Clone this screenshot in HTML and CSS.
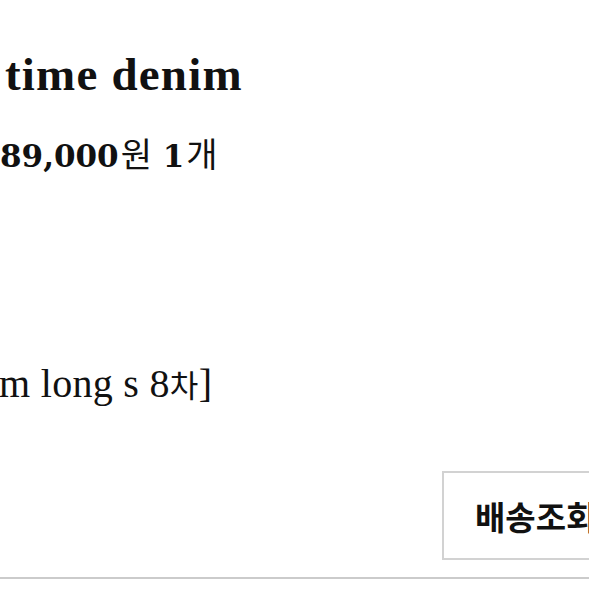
FILE: index.html
```html
<!DOCTYPE html>
<html lang="ko">
<head>
<meta charset="utf-8">
<title>주문 상세</title>
<link rel="stylesheet" href="styles.css">
</head>
<body>
<div class="order">
  <div class="item">
    <h2 class="item-name">time denim</h2>
    <p class="item-price"><span class="num">89,000</span><span class="ko">원</span> <span class="num">1</span><span class="ko">개</span></p>
    <p class="item-option">m long s 8<span class="ko">차</span>]</p>
  </div>
  <div class="actions">
    <button class="btn-track" type="button">배송조회</button>
  </div>
</div>
</body>
</html>
```

FILE: styles.css
```css
html,
body {
  margin: 0;
  padding: 0;
  background: #fff;
  overflow: hidden;
}

.order {
  width: 589px;
  color: #111;
  font-family: "Liberation Serif", serif;
}

.item {
  display: flex;
  flex-direction: column;
}

.item-name {
  margin: 46px 0 0 5px;
  font-size: 47px;
  line-height: 56px;
  font-weight: 700;
  letter-spacing: 1.2px;
}

.item-price {
  margin: 31px 0 0 0;
  font-family: "DejaVu Serif", serif;
  font-size: 31px;
  line-height: 40px;
  font-weight: 700;
}

.item-price .ko {
  font-family: "Noto Sans CJK KR", sans-serif;
  font-weight: 400;
  font-size: 34px;
  margin-left: 2px;
}

.item-option {
  margin: 186px 0 0 -1px;
  font-size: 40px;
  line-height: 44px;
  letter-spacing: 0.3px;
}

.item-option .ko {
  font-family: "Noto Sans CJK KR", sans-serif;
  font-weight: 400;
  font-size: 31px;
}

.actions {
  display: flex;
  padding: 65px 0 17px 442px;
  border-bottom: 2px solid #cbcbcb;
}

.btn-track {
  flex: none;
  width: 220px;
  height: 89px;
  padding: 0 0 0 31px;
  background: #fff;
  border: 2px solid #d2d2d2;
  text-align: left;
  font-family: "Noto Sans CJK KR", sans-serif;
  font-weight: 700;
  font-size: 33px;
  color: #111;
}
```
